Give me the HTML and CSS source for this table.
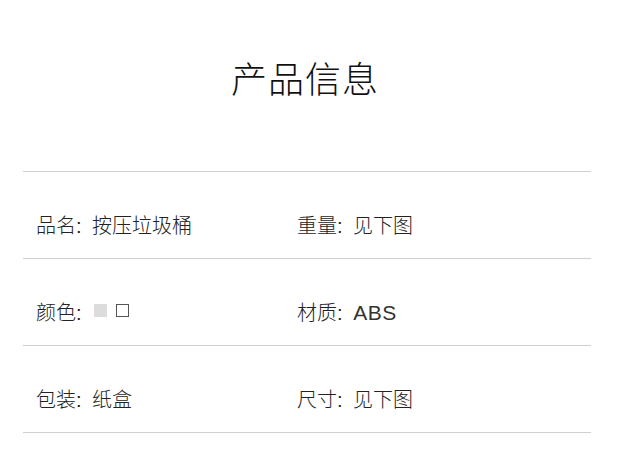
FILE: index.html
```html
<!DOCTYPE html>
<html lang="zh">
<head>
<meta charset="utf-8">
<title>产品信息</title>
<link rel="stylesheet" href="styles.css">
</head>
<body>
<div class="page">
  <header class="head">
    <h1 class="title">产品信息</h1>
  </header>
  <div class="table">
    <div class="row">
      <div class="cell"><span class="key">品名:</span> 按压垃圾桶</div>
      <div class="cell"><span class="key">重量:</span> 见下图</div>
    </div>
    <div class="row">
      <div class="cell"><span class="key">颜色:</span> <span class="swatch swatch-grey"></span><span class="swatch swatch-white"></span></div>
      <div class="cell"><span class="key">材质:</span> <span class="latin">ABS</span></div>
    </div>
    <div class="row">
      <div class="cell"><span class="key">包装:</span> 纸盒</div>
      <div class="cell"><span class="key">尺寸:</span> 见下图</div>
    </div>
  </div>
</div>
</body>
</html>
```
FILE: styles.css
```css
html, body {
  margin: 0;
  padding: 0;
  background: #fff;
}
body {
  font-family: "Liberation Sans", "Noto Sans CJK SC", sans-serif;
  color: #222;
}
.page {
  width: 568px;
  margin-left: 23px;
}
.head {
  height: 171px;
  border-bottom: 1px solid #cfcfcf;
  display: flex;
  justify-content: center;
}
.title {
  margin: 0 4px 0 0;
  padding-top: 55px;
  font-family: "Noto Sans CJK SC", sans-serif;
  font-size: 36px;
  line-height: 44px;
  font-weight: 200;
  letter-spacing: 1px;
  color: #111;
}
.row {
  display: grid;
  grid-template-columns: 261px 1fr;
  padding: 39px 0 17px 13px;
  border-bottom: 1px solid #cfcfcf;
}
.cell {
  font-size: 20px;
  line-height: 30px;
  font-weight: 300;
  white-space: nowrap;
}
.key {
  margin-right: 5px;
}
.latin {
  font-size: 21px;
  letter-spacing: 0.5px;
  color: #333;
}
.swatch {
  display: inline-block;
  width: 13px;
  height: 13px;
  box-sizing: border-box;
  vertical-align: 3px;
}
.swatch-grey {
  margin-left: 2px;
  background: #dcdcdc;
}
.swatch + .swatch {
  margin-left: 9px;
}
.swatch-white {
  background: #fff;
  border: 1px solid #555;
}
```
